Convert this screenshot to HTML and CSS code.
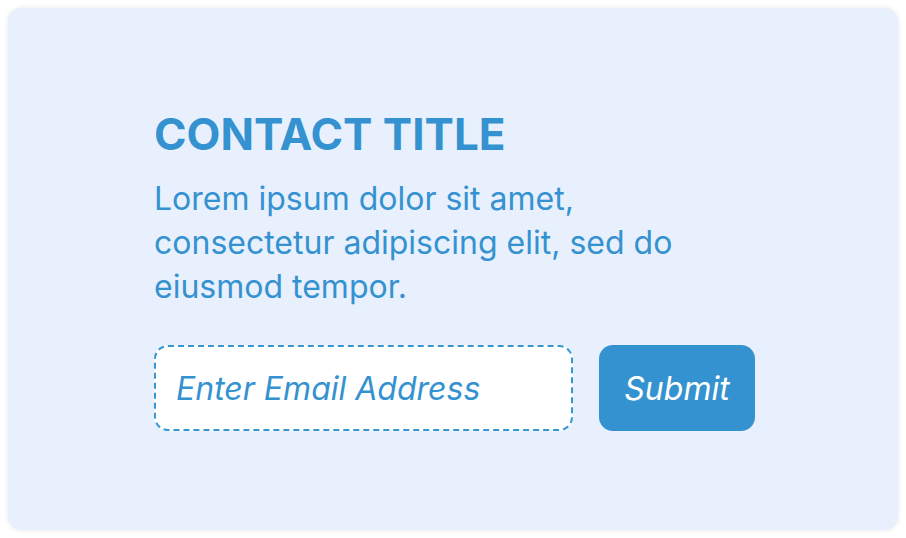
FILE: index.html
```html
<!DOCTYPE html>
<html>
<head>
<meta charset="utf-8">
<link rel="stylesheet" href="styles.css">
</head>
<body>
<div class="card">
  <div class="content">
    <h1 class="title">CONTACT TITLE</h1>
    <p class="desc">Lorem ipsum dolor sit amet,<br>consectetur adipiscing elit, sed do<br>eiusmod tempor.</p>
    <form class="form">
      <input class="email" type="text" placeholder="Enter Email Address">
      <button class="submit" type="button">Submit</button>
    </form>
  </div>
</div>
</body>
</html>
```
FILE: styles.css
```css
html, body { margin: 0; padding: 0; background: #ffffff; }
body { padding: 8px; font-family: Inter, "Noto Sans", sans-serif; }
.card {
  width: 890px;
  height: 522px;
  box-sizing: border-box;
  background: #e8f0fd;
  border-radius: 14px;
  box-shadow: 0 0 5px rgba(0,0,0,0.10);
  padding: 100px 130px 0 146px;
}
.content { display: flex; flex-direction: column; }
.title {
  margin: 0;
  font-size: 44px;
  font-weight: 700;
  line-height: 53px;
  color: #3592d0;
}
.desc {
  margin: 16px 0 0;
  font-size: 32px;
  line-height: 44px;
  color: #3592d0;
}
.form { display: flex; gap: 26px; margin-top: 36px; }
.email {
  flex: 0 0 auto;
  width: 419px;
  height: 86px;
  box-sizing: border-box;
  border: 2px dashed #3596d4;
  border-radius: 14px;
  background: #ffffff;
  padding: 0 20px;
  font-family: Inter, sans-serif;
  font-style: italic;
  font-size: 32px;
  color: #3592d0;
  outline: none;
}
.email::placeholder { color: #3592d0; opacity: 1; }
.submit {
  flex: 0 0 auto;
  width: 156px;
  height: 86px;
  border: none;
  border-radius: 14px;
  background: #3592d0;
  color: #ffffff;
  font-family: Inter, sans-serif;
  font-style: italic;
  font-size: 32px;
  padding: 0;
}
```
